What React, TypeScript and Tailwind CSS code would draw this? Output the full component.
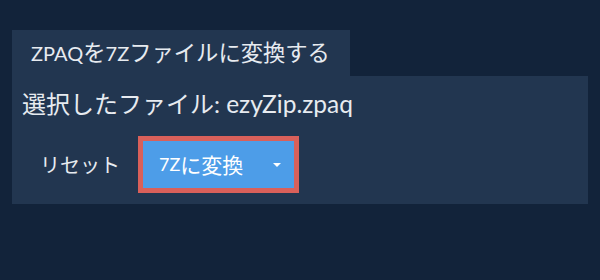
export default function App() {
  return (
    <main
      className="min-h-[280px] w-[600px] bg-[#12233a] px-3 pt-[30px] text-[#e7ebf0]"
      style={{ fontFamily: 'Lato, "Noto Sans CJK JP", sans-serif' }}
    >
      <div className="inline-flex h-[46px] items-center bg-[#223650] pl-[19px] pr-[20px] text-[20px] leading-none">
        <span>ZPAQ</span>
        <span className="text-[22.3px]">を</span>
        <span>7Z</span>
        <span className="text-[22.3px]">ファイルに変換する</span>
      </div>
      <div className="bg-[#223650] px-[10px] pt-[13px] pb-[11px]">
        <p className="text-[24px] leading-[30px]">
          <span>選択したファイル: </span>
          <span className="text-[24.5px]">ezyZip.zpaq</span>
        </p>
        <div className="mt-[17px] flex items-center">
          <button className="pl-[18px] pr-[18px] text-[20px]">リセット</button>
          <button className="flex h-[57px] items-center border-[5px] border-[#d9605a] bg-[#4d9de8] pl-[16px] pr-[13px] text-[18px] text-white">
            <span>7Z</span>
            <span className="text-[21px]">に変換</span>
            <span className="ml-[30px] h-0 w-0 border-x-[4px] border-t-[4px] border-x-transparent border-t-white" />
          </button>
        </div>
      </div>
    </main>
  );
}
